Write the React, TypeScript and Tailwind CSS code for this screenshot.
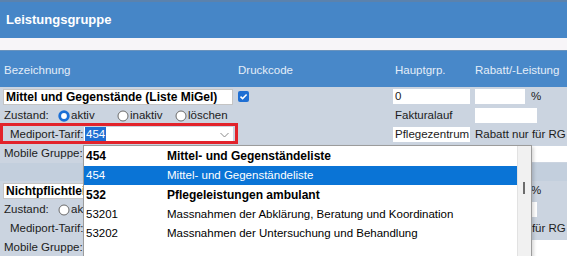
/** Leistungsgruppe — tariff group editor with an open Mediport-Tarif dropdown. */

const FONT = "font-['Liberation_Sans',Arial,sans-serif]";

interface TarifOption {
  code: string;
  label: string;
  group?: boolean;
  selected?: boolean;
}

const TARIF_OPTIONS: TarifOption[] = [
  { code: "454", label: "Mittel- und Gegenständeliste", group: true },
  { code: "454", label: "Mittel- und Gegenständeliste", selected: true },
  { code: "532", label: "Pflegeleistungen ambulant", group: true },
  { code: "53201", label: "Massnahmen der Abklärung, Beratung und Koordination" },
  { code: "53202", label: "Massnahmen der Untersuchung und Behandlung" },
];

function Radio({ checked }: { checked?: boolean }) {
  return (
    <svg width="12" height="12" viewBox="0 0 12 12" className="mr-[1px] shrink-0">
      {checked ? (
        <circle cx="6" cy="6" r="4.3" fill="#fff" stroke="#1a6fd6" strokeWidth="2.8" />
      ) : (
        <circle cx="6" cy="6" r="5" fill="#fff" stroke="#6b6b6b" strokeWidth="1" />
      )}
    </svg>
  );
}

function CheckBox() {
  return (
    <svg width="11" height="11" viewBox="0 0 11 11">
      <rect x="0" y="0" width="11" height="11" rx="2" fill="#1f6fd3" />
      <path d="M2.5 5.6 L4.6 7.6 L8.6 3.4" fill="none" stroke="#fff" strokeWidth="1.5" />
    </svg>
  );
}

function Group({
  name,
  state,
  checked,
}: {
  name: string;
  state: "aktiv" | "inaktiv" | "löschen";
  checked?: boolean;
}) {
  return (
    <div className="bg-[#cbd4e0] text-[11.5px] text-[#1c1c1c]">
      {/* Bezeichnung / Druckcode / Hauptgrp. / Rabatt */}
      <div className="flex h-[19px] items-center">
        <div className="w-[236px] pl-[3px]">
          <div className="h-[16px] w-[230px] overflow-hidden whitespace-nowrap border border-[#c4c4c4] bg-white px-[2px] text-[12px] font-bold leading-[14px] text-black">
            {name}
          </div>
        </div>
        <div className="flex w-[155px] pl-[2px]">{checked && <CheckBox />}</div>
        <div className="w-[82px] pl-[2px]">
          <div className="h-[15px] w-[77px] bg-white px-[2px] leading-[15px]">0</div>
        </div>
        <div className="flex flex-1 items-center pl-[2px]">
          <div className="h-[15px] w-[50px] bg-white" />
          <span className="ml-[6px]">%</span>
        </div>
      </div>

      {/* Zustand / Fakturalauf */}
      <div className="flex h-[19px] items-center">
        <div className="flex w-[236px] items-center pl-[4px]">
          <span className="w-[54px]">Zustand:</span>
          <span className="flex w-[59px] items-center">
            <Radio checked={state === "aktiv"} />
            aktiv
          </span>
          <span className="flex w-[58px] items-center">
            <Radio checked={state === "inaktiv"} />
            inaktiv
          </span>
          <span className="flex items-center">
            <Radio checked={state === "löschen"} />
            löschen
          </span>
        </div>
        <div className="w-[155px]" />
        <div className="w-[82px] pl-[4px]">Fakturalauf</div>
        <div className="flex-1 pl-[2px]">
          <div className="h-[15px] w-[62px] bg-white" />
        </div>
      </div>

      {/* Mediport-Tarif / Pflegezentrum */}
      <div className="relative flex h-[19px] items-center">
        <div className="flex w-[236px] items-center pl-[10px]">
          <span className="w-[74px] whitespace-nowrap">Mediport-Tarif:</span>
          <div className="flex h-[15px] w-[149px] items-center bg-white pl-[1px] pr-[4px]">
            <span className="bg-[#1f6fd3] px-[1px] leading-[15px] text-white">454</span>
            <svg width="9" height="6" viewBox="0 0 9 6" className="ml-auto">
              <path d="M0.5 1 L4.5 5 L8.5 1" fill="none" stroke="#8a8a8a" strokeWidth="1" />
            </svg>
          </div>
        </div>
        <div className="w-[155px]" />
        <div className="w-[82px] pl-[2px]">
          <div className="h-[15px] w-[77px] overflow-hidden whitespace-nowrap bg-white pl-[2px] leading-[15px]">
            Pflegezentrum
          </div>
        </div>
        <div className="flex-1 whitespace-nowrap pl-[2px]">Rabatt nur für RG</div>
        {checked && (
          <div className="pointer-events-none absolute left-0 top-[-2px] h-[21px] w-[238px] border-[3px] border-[#e2232b]" />
        )}
      </div>

      {/* Mobile Gruppe */}
      <div className="flex h-[19px] items-center">
        <span className="w-[83px] whitespace-nowrap pl-[4px]">Mobile Gruppe:</span>
        <div className="h-[16px] flex-1 bg-white" />
      </div>
    </div>
  );
}

function TarifDropdown() {
  return (
    <div className="absolute left-[83px] top-[145px] flex h-[125px] w-[449px] border border-[#9c9c9c] bg-white text-[11.5px] text-black shadow-[2px_2px_3px_rgba(0,0,0,0.15)]">
      <div className="flex-1">
        {TARIF_OPTIONS.map((o, i) => (
          <div
            key={i}
            className={`flex h-[19.5px] items-center whitespace-nowrap ${
              o.selected ? "bg-[#0a74d6] text-white" : ""
            } ${o.group ? "text-[12px] font-bold" : ""}`}
          >
            <span className="w-[83px] pl-[2px]">{o.code}</span>
            <span>{o.label}</span>
          </div>
        ))}
      </div>
      <div className="relative w-[14px] border-l border-[#e2e2e2] bg-[#f1f1f1]">
        <div className="absolute left-[5px] top-[36px] h-[12px] w-[2px] bg-[#6c6c6c]" />
      </div>
    </div>
  );
}

export default function App() {
  return (
    <div className={`relative h-[256px] w-[567px] overflow-hidden bg-[#f7f5f8] ${FONT}`}>
      <div className="flex h-[38px] items-center border-t-2 border-[#5b82ad] bg-[#4686c7] pl-[6px] text-[13px] font-bold text-white">
        Leistungsgruppe
      </div>
      <div className="h-[12px]" />
      <div className="flex h-[37px] items-center whitespace-nowrap border-t border-[#6a93bd] bg-[#4888c9] pt-[3px] text-[11.5px] text-[#e4edf8]">
        <span className="w-[238px] pl-[4px]">Bezeichnung</span>
        <span className="w-[157px]">Druckcode</span>
        <span className="w-[80px]">Hauptgrp.</span>
        <span>Rabatt/-Leistung</span>
      </div>

      <Group name="Mittel und Gegenstände (Liste MiGel)" state="aktiv" checked />
      <div className="h-[18px] bg-[#c3cfdd]" />
      <Group name="Nichtpflichtleistungen" state="inaktiv" />

      <TarifDropdown />
    </div>
  );
}
